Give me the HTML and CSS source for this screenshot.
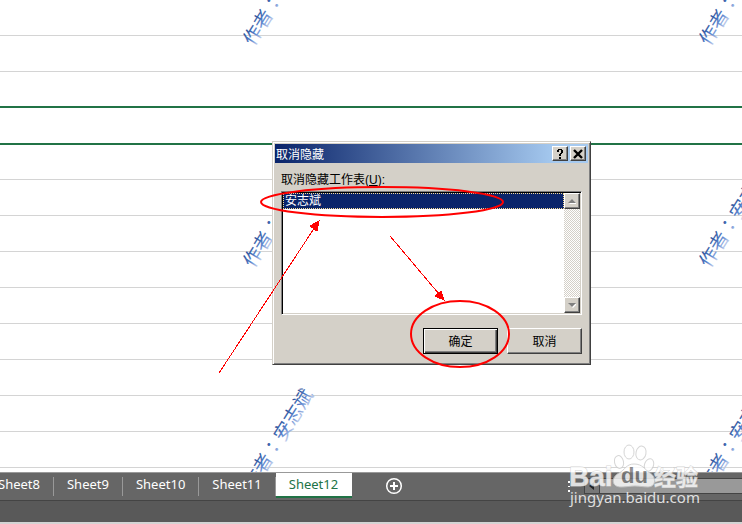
FILE: index.html
```html
<!DOCTYPE html>
<html lang="zh-CN">
<head>
  <meta charset="UTF-8">
  <meta name="viewport" content="width=device-width, initial-scale=1.0">
  <title>取消隐藏</title>
  <link rel="stylesheet" href="styles.css">
</head>
<body>
  <main class="sheet">
    <div class="row"></div>
    <div class="row"></div>
    <div class="row selected"></div>
    <div class="row selected"></div>
    <div class="row"></div>
    <div class="row"></div>
    <div class="row"></div>
    <div class="row"></div>
    <div class="row"></div>
    <div class="row"></div>
    <div class="row"></div>
    <div class="row"></div>
    <div class="row"></div>

    <svg class="authors" lang="zh-Hant" aria-hidden="true">
      <defs>
        <linearGradient id="ink" x1="0" y1="0" x2="0" y2="1">
          <stop offset="0.2" stop-color="#244a94"/>
          <stop offset="0.6" stop-color="#5c87d0"/>
          <stop offset="0.95" stop-color="#dfe7f8"/>
        </linearGradient>
      </defs>
      <g fill="url(#ink)">
        <text transform="translate(278 -5) rotate(-58)" y="7">作者：安志斌</text>
        <text transform="translate(278 217) rotate(-58)" y="7">作者：安志斌</text>
        <text transform="translate(278 439) rotate(-58)" y="7">作者：安志斌</text>
        <text transform="translate(734 -5) rotate(-58)" y="7">作者：安志斌</text>
        <text transform="translate(734 217) rotate(-58)" y="7">作者：安志斌</text>
        <text transform="translate(734 439) rotate(-58)" y="7">作者：安志斌</text>
      </g>
    </svg>
  </main>

  <footer>
    <div class="tab-bar">
      <nav class="tabs">
        <button class="tab">Sheet8</button>
        <button class="tab">Sheet9</button>
        <button class="tab">Sheet10</button>
        <button class="tab">Sheet11</button>
        <button class="tab active">Sheet12</button>
      </nav>
      <button class="add-sheet" aria-label="新工作表">
        <svg width="18" height="18" viewBox="0 0 18 18" fill="none" stroke="#fff">
          <circle cx="9" cy="9" r="7.3" stroke-width="1.5"/>
          <path d="M9 5v8M5 9h8" stroke-width="2"/>
        </svg>
      </button>
      <div class="grip"><i></i><i></i><i></i></div>
      <div class="h-scroll">
        <button class="h-left" aria-label="向左">
          <svg width="14" height="14" viewBox="0 0 14 14"><path d="M9 3v8L4 7z" fill="#222"/></svg>
        </button>
        <div class="h-thumb"></div>
      </div>
    </div>
    <div class="status"></div>
  </footer>

  <section class="dialog" role="dialog" aria-labelledby="dialogTitle">
    <div class="title-bar">
      <span id="dialogTitle">取消隐藏</span>
      <button class="title-btn" aria-label="帮助">
        <svg width="12" height="10" viewBox="0 0 12 10"><path d="M3 1h1V0h4v1h1v3H8v1H7v2H5V5h1V4h1V1H5v2H3zM5 8h2v2H5z" fill="#000"/></svg>
      </button>
      <button class="title-btn" aria-label="关闭">
        <svg width="12" height="10" viewBox="0 0 12 10"><path d="M2 1l8 8M10 1L2 9" stroke="#000" stroke-width="2.4"/></svg>
      </button>
    </div>
    <div class="dialog-body">
      <label for="sheetList">取消隐藏工作表(<u>U</u>):</label>
      <div class="list-box">
        <div class="list" id="sheetList" role="listbox" tabindex="0">
          <div class="item" role="option" aria-selected="true">安志斌</div>
        </div>
        <div class="v-scroll">
          <button class="scroll-btn" aria-label="向上">
            <svg width="8" height="5" viewBox="0 0 8 5"><path d="M1 5l4-4 4 4z" fill="#fff"/><path d="M0 4l4-4 4 4z" fill="#808080"/></svg>
          </button>
          <button class="scroll-btn" aria-label="向下">
            <svg width="8" height="5" viewBox="0 0 8 5"><path d="M1 1h8L5 5z" fill="#fff"/><path d="M0 0h8L4 4z" fill="#808080"/></svg>
          </button>
        </div>
      </div>
      <div class="actions">
        <button class="btn default">确定</button>
        <button class="btn">取消</button>
      </div>
    </div>
  </section>

  <svg class="marks" aria-hidden="true" fill="none" stroke="#f00">
    <g stroke-width="2">
      <ellipse cx="382" cy="202" rx="121" ry="15"/>
      <ellipse cx="460" cy="334" rx="49" ry="33"/>
    </g>
    <g shape-rendering="crispEdges">
      <path d="M219 373L315 227M390 236L439 294"/>
      <path d="M319 221L317 231L310 226zM444 300L435 296L441 291z" fill="#f00"/>
    </g>
  </svg>

  <svg class="logo" viewBox="0 0 140 70" role="img" aria-label="Baidu 经验">
    <text class="logo-bai" x="4" y="46">Bai</text>
    <g fill="#fff" stroke="#ccc" stroke-width="1">
      <ellipse cx="54" cy="22" rx="4.5" ry="6.5" transform="rotate(-12 54 22)"/>
      <ellipse cx="64" cy="12" rx="5" ry="7"/>
      <ellipse cx="76" cy="13" rx="5" ry="7" transform="rotate(12 76 13)"/>
      <ellipse cx="84" cy="25" rx="4.5" ry="6.5" transform="rotate(20 84 25)"/>
      <path d="M69 24C61 24 60 30 54 33C46 37 46 47 56 47C62 47 65 46 70 46C75 46 78 47 83 47C91 47 92 37 85 33C80 30 78 24 69 24z"/>
    </g>
    <text class="logo-du" x="56" y="43">du</text>
    <text class="logo-cn" x="89" y="45">经验</text>
    <text class="logo-url" x="5" y="63">jingyan.baidu.com</text>
  </svg>
</body>
</html>
```
FILE: styles.css
```css
* {
  box-sizing: border-box;
}
body {
  margin: 0;
  height: 100vh;
  display: flex;
  flex-direction: column;
  overflow: hidden;
  position: relative;
  background: #fff;
  font-family: "Liberation Sans", "Noto Sans CJK SC", sans-serif;
  font-size: 12px;
  color: #000;
}
button {
  margin: 0;
  padding: 0;
  border: none;
  background: none;
  font: inherit;
  color: inherit;
}
svg {
  display: block;
}

/* worksheet */
.sheet {
  flex: 1;
  min-height: 0;
  overflow: hidden;
  position: relative;
}
.row {
  height: 36px;
  border-bottom: 1px solid #d4d4d4;
}
.row.selected {
  border-bottom: 2px solid #217346;
}
.row.selected + .row.selected {
  height: 37px;
}
.row.selected + .row:not(.selected) {
  height: 35px;
}
.authors {
  position: absolute;
  inset: 0;
  width: 100%;
  height: 100%;
  font-family: "Noto Sans CJK TC", sans-serif;
  font-size: 19px;
  text-anchor: middle;
}

/* sheet tabs */
.tab-bar {
  display: flex;
  height: 29px;
  background: #666;
  border-top: 1px solid #999;
  border-bottom: 1px solid #444;
  overflow: hidden;
}
.tabs {
  display: flex;
  margin-left: -15px;
  font-family: "Noto Sans", sans-serif;
  font-size: 13px;
  line-height: 20px;
  color: #fff;
}
.tab {
  position: relative;
  height: 25px;
  padding: 0 14px 3px 13px;
}
.tab:not(.active)::after {
  content: "";
  position: absolute;
  top: 4px;
  right: 0;
  width: 1px;
  height: 19px;
  background: #999;
}
.tab.active {
  padding-bottom: 1px;
  background: #fff;
  color: #217346;
  border-bottom: 2px solid #217346;
}
.add-sheet {
  margin-left: 33px;
  height: 26px;
}
.grip {
  margin-left: auto;
  padding: 8px 0;
  display: flex;
  flex-direction: column;
  gap: 3px;
}
.grip i {
  width: 2px;
  height: 2px;
  background: #fff;
}
.h-scroll {
  width: 158px;
  height: 16px;
  margin: 5px 0 0 14px;
  display: flex;
  border: 1px solid #444;
  border-right: none;
}
.h-left {
  width: 15px;
  background: #777;
  border-right: 1px solid #444;
}
.h-thumb {
  flex: 1;
  background: #999;
}
.status {
  height: 23px;
  background: #595959;
  border-bottom: 2px solid #d4d4d4;
}

/* dialog */
.dialog {
  position: absolute;
  left: 272px;
  top: 141px;
  width: 319px;
  padding: 1px;
  background: #d4d0c8;
  border: 1px solid;
  border-color: #d4d0c8 #404040 #404040 #d4d0c8;
  box-shadow: inset 1px 1px #fff, inset -1px -1px #808080;
}
.title-bar {
  display: flex;
  align-items: center;
  height: 19px;
  margin: 1px;
  padding: 0 2px 0 1px;
  background: linear-gradient(to right, #0a246a, #a6caf0 90%);
  color: #fff;
}
.title-bar span {
  flex: 1;
}
.title-btn,
.scroll-btn {
  display: flex;
  align-items: center;
  justify-content: center;
  width: 16px;
  background: #d4d0c8;
  border: 1px solid;
  border-color: #fff #404040 #404040 #fff;
  box-shadow: inset -1px -1px #808080;
}
.title-btn {
  height: 15px;
}
.title-btn + .title-btn {
  margin-left: 2px;
}
.dialog-body {
  padding: 7px 7px 9px;
}
.dialog-body label {
  display: block;
  line-height: 18px;
}
.list-box {
  display: flex;
  height: 124px;
  margin-top: 2px;
  background: #fff;
  border: 1px solid;
  border-color: #808080 #fff #fff #808080;
  box-shadow: inset 1px 1px #000, inset -1px -1px #d4d0c8;
  padding: 1px;
}
.list {
  flex: 1;
}
.item {
  height: 16px;
  padding-left: 1px;
  line-height: 14px;
  background: #0a246a;
  border: 1px dotted #f5db95;
  color: #fff;
}
.v-scroll {
  display: flex;
  flex-direction: column;
  justify-content: space-between;
  background: repeating-conic-gradient(#d4d0c8 0 25%, #fff 0 50%) 0 0 / 2px 2px;
}
.scroll-btn {
  height: 16px;
}
.actions {
  display: flex;
  justify-content: flex-end;
  gap: 9px;
  margin-top: 13px;
}
.btn {
  width: 75px;
  height: 26px;
  padding-bottom: 2px;
  border: 1px solid;
  border-color: #fff #404040 #404040 #fff;
  box-shadow: inset -1px -1px #808080;
}
.btn.default {
  border-color: #000;
  box-shadow: inset 1px 1px #fff, inset -1px -1px #404040, inset -2px -2px #808080;
}

/* arrows and circles over everything */
.marks {
  position: absolute;
  inset: 0;
  width: 100%;
  height: 100%;
  pointer-events: none;
}
.logo {
  position: absolute;
  right: 37px;
  bottom: 14px;
  width: 140px;
  height: 70px;
  opacity: 0.8;
  pointer-events: none;
}
.logo text {
  fill: #fff;
}
.logo-bai,
.logo-cn {
  stroke: #ccc;
  stroke-width: 1px;
  paint-order: stroke;
}
.logo-bai {
  font-size: 28px;
  font-weight: bold;
}
.logo .logo-du {
  fill: #777;
  font-size: 22px;
  font-weight: bold;
}
.logo-cn {
  font-size: 22px;
  font-weight: bold;
}
.logo-url {
  font-family: "Noto Sans", sans-serif;
  font-size: 15px;
}
```
